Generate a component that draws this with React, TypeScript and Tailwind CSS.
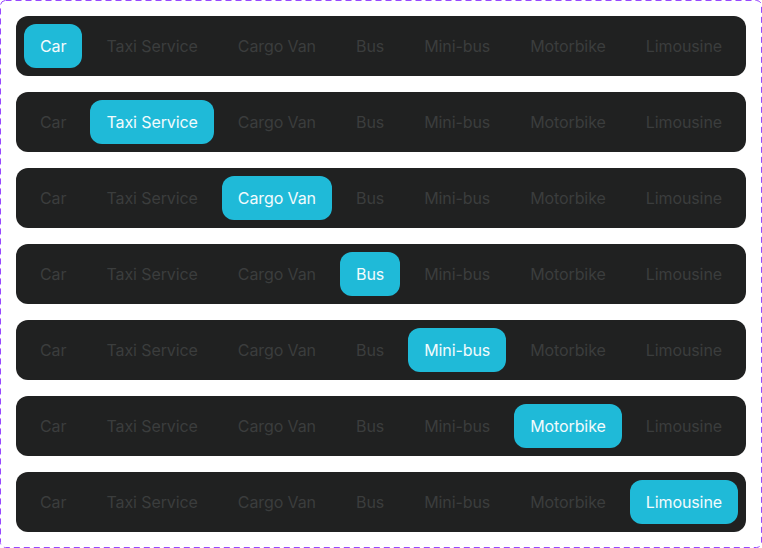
const tabs = ["Car", "Taxi Service", "Cargo Van", "Bus", "Mini-bus", "Motorbike", "Limousine"];

function TabBar({ active }: { active: number }) {
  return (
    <div className="flex h-[60px] items-center justify-between gap-2 rounded-xl bg-[#202121] px-2">
      {tabs.map((tab, i) => (
        <button
          key={tab}
          className={
            i === active
              ? "flex h-11 items-center whitespace-nowrap rounded-xl bg-[#1fbad8] px-4 text-base tracking-[-0.1px] text-[#f2fbfd]"
              : "flex h-11 items-center whitespace-nowrap rounded-xl px-4 text-base tracking-[-0.1px] text-[#3b3d3d]"
          }
        >
          {tab}
        </button>
      ))}
    </div>
  );
}

export default function App() {
  return (
    <div
      className="relative h-[548px] w-[762px] bg-white p-4"
      style={{ fontFamily: "Inter, 'Noto Sans', sans-serif" }}
    >
      {/* dashed frame around the variants */}
      <svg className="pointer-events-none absolute inset-0" width="762" height="548">
        <rect
          x="0.5"
          y="0.5"
          width="761"
          height="547"
          rx="5"
          fill="none"
          stroke="#9747ff"
          strokeWidth="1"
          strokeDasharray="6 4"
        />
      </svg>
      <div className="flex flex-col gap-4">
        {tabs.map((tab, i) => (
          <TabBar key={tab} active={i} />
        ))}
      </div>
    </div>
  );
}
